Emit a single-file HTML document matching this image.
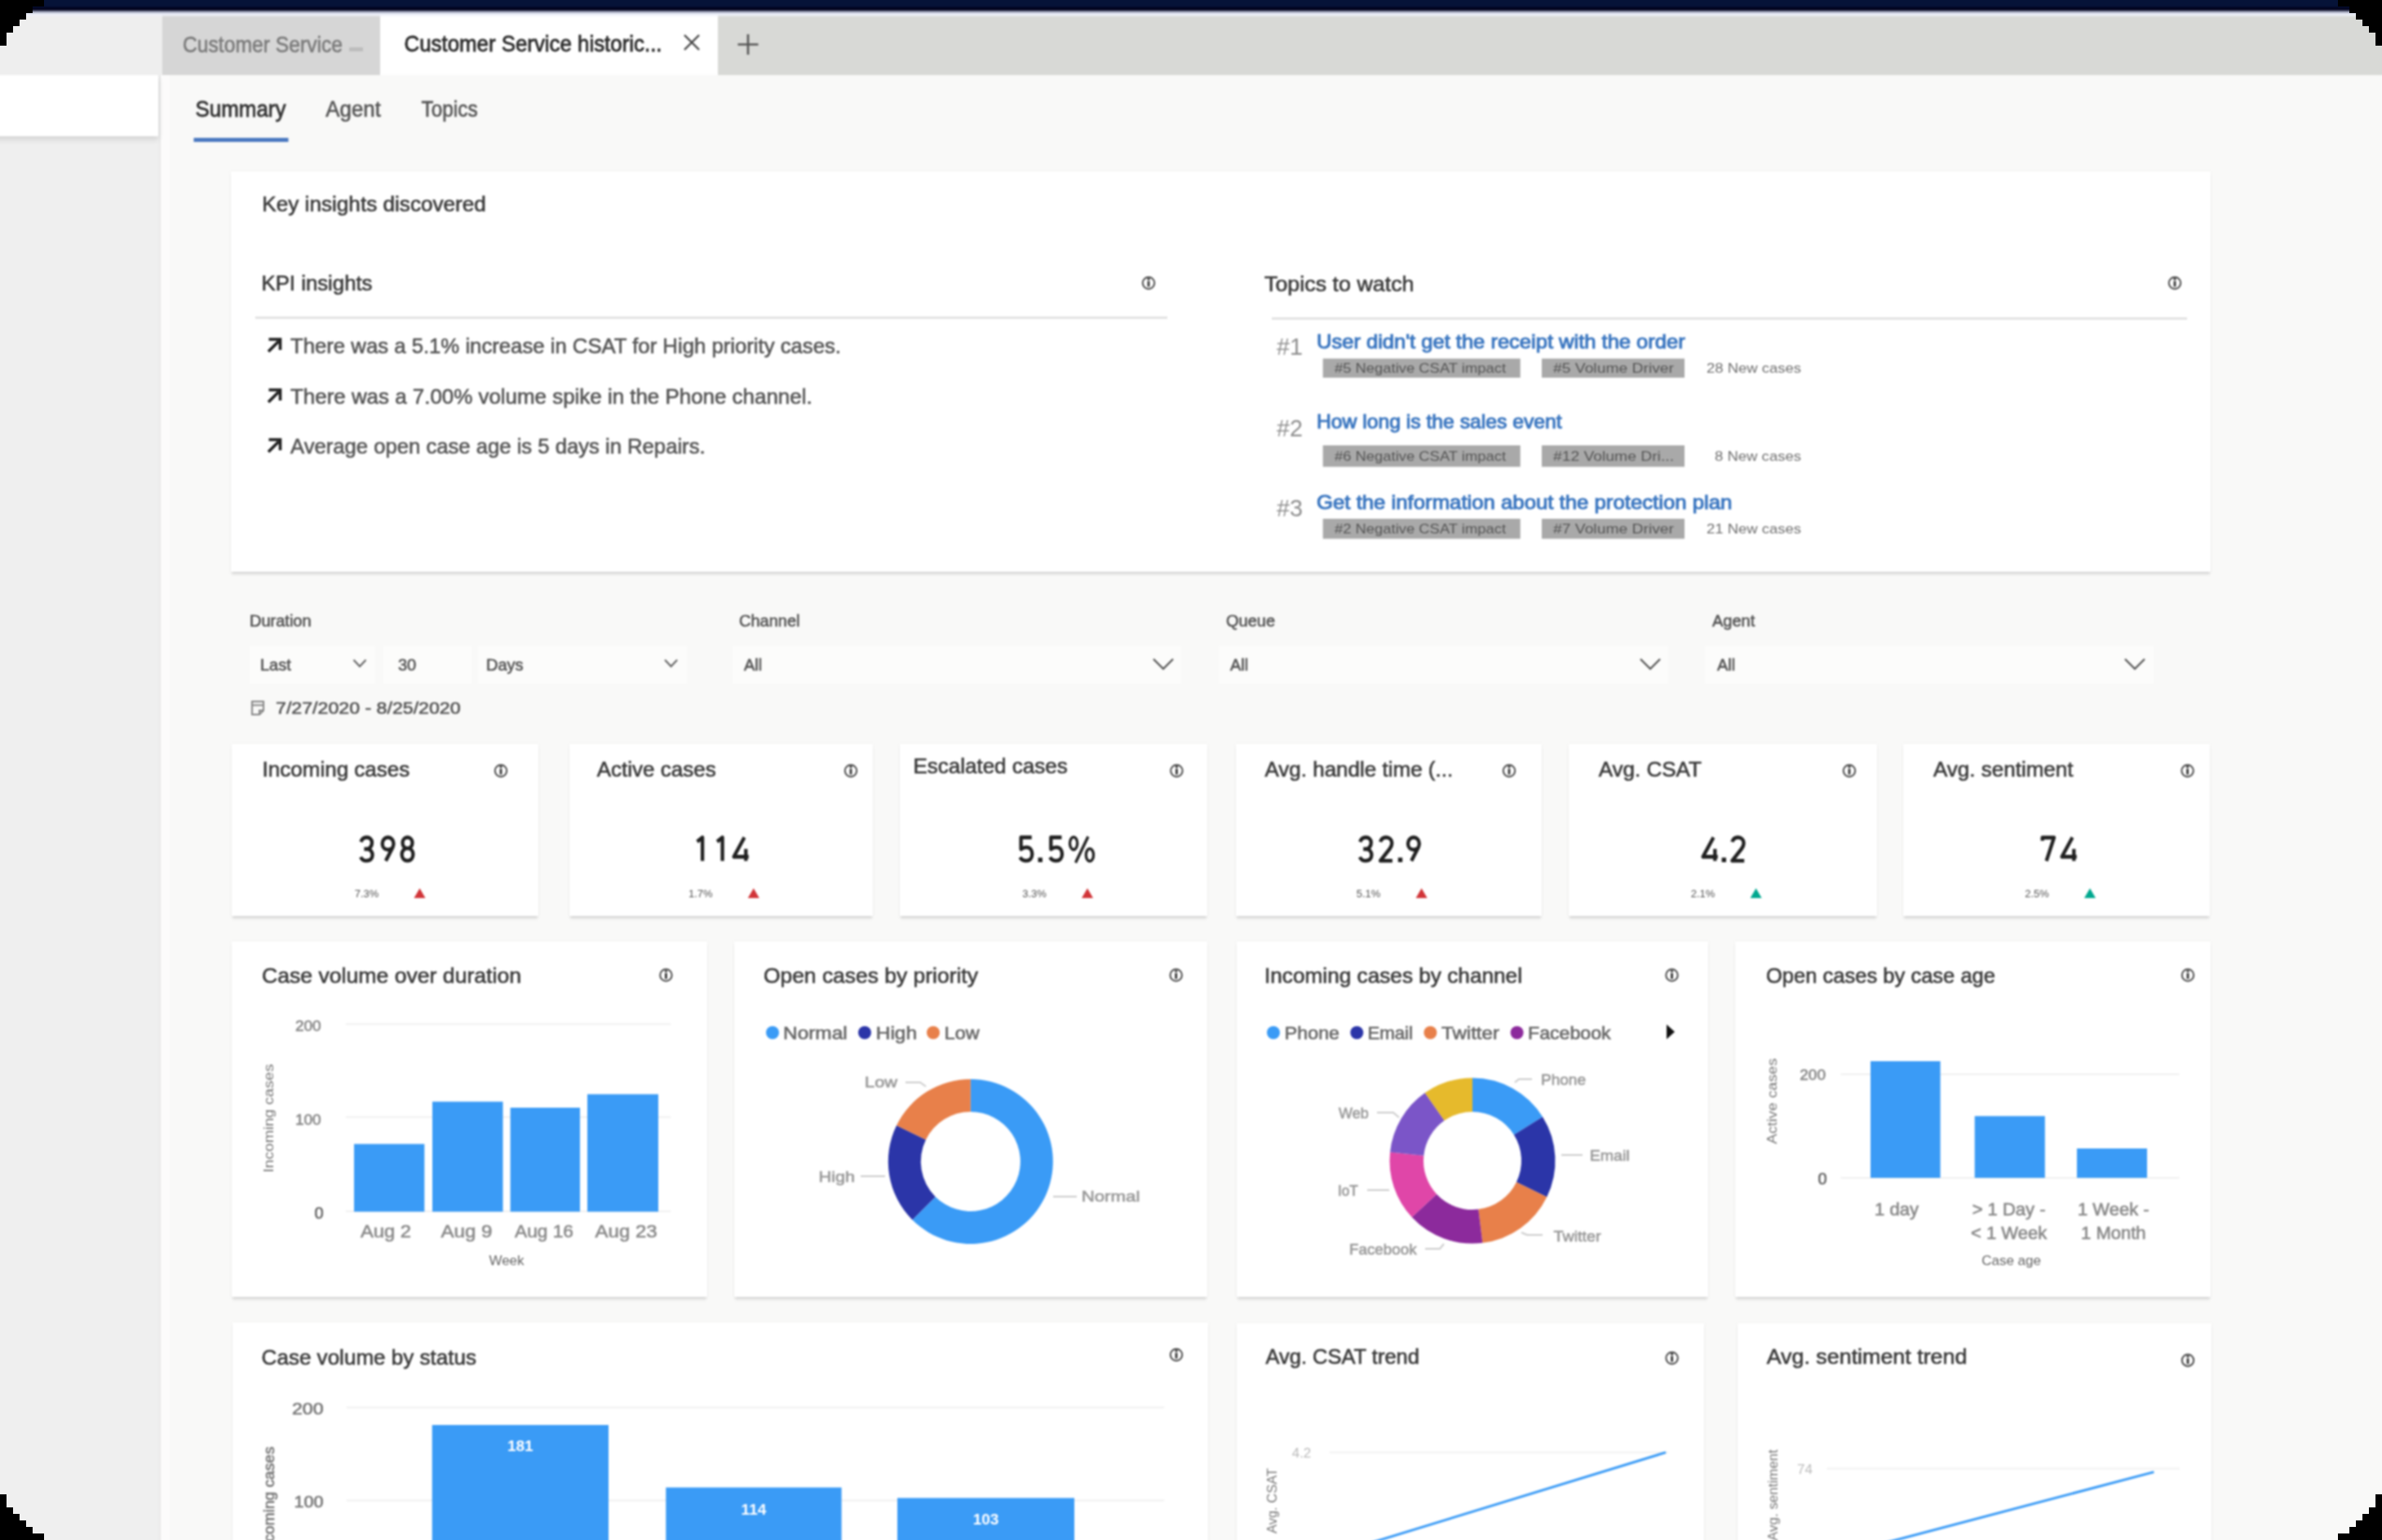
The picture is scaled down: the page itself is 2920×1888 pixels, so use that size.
<!DOCTYPE html>
<html><head><meta charset="utf-8"><title>Customer Service historical analytics</title>
<style>
html,body{margin:0;padding:0;width:2920px;height:1888px;overflow:hidden;background:#f9f9f8;}
body{position:relative;font-family:"Liberation Sans", sans-serif;}
svg text{font-family:"Liberation Sans", sans-serif;}
</style></head><body>
<div id="page" style="position:absolute;left:0;top:0;width:2920px;height:1888px;filter:blur(1.2px)">
<div style="position:absolute;left:-40px;top:-40px;width:3000px;height:1968px;background:#f9f9f8;"></div>
<div style="position:absolute;left:-40px;top:92px;width:236px;height:1836px;background:#efefef;"></div>
<div style="position:absolute;left:195px;top:92px;width:2px;height:1836px;background:#e9e9e9;"></div>
<div style="position:absolute;left:197px;top:92px;width:11px;height:1836px;background:#fcfbfb;"></div>
<div style="position:absolute;left:-40px;top:92px;width:234px;height:75px;background:#ffffff;box-shadow:0 4px 7px rgba(0,0,0,0.12);"></div>
<div style="position:absolute;left:-40px;top:13px;width:3000px;height:79px;background:#d8d9d6;"></div>
<div style="position:absolute;left:-40px;top:13px;width:239px;height:79px;background:#eeeeee;"></div>
<div style="position:absolute;left:199px;top:17px;width:267px;height:75px;background:#d6d6d6;"></div>
<div style="position:absolute;left:466px;top:17px;width:414px;height:75px;background:#ffffff;"></div>
<div style="position:absolute;left:-40px;top:-40px;width:3000px;height:61px;background:linear-gradient(to bottom,#061338 0px,#061338 48px,#00001a 50px,#00001a 52px,#8a90a8 54px,#eef1fb 57px,#eef1fb 58px,rgba(238,241,251,0) 61px);"></div>
<div style="position:absolute;left:283px;top:210px;width:2427px;height:491px;background:#fff;box-shadow:0 4px 3px -1px rgba(0,0,0,0.13),0 0 3px rgba(0,0,0,0.06);"></div>
<div style="position:absolute;left:284px;top:912px;width:376px;height:211px;background:#fff;box-shadow:0 4px 3px -1px rgba(0,0,0,0.13),0 0 3px rgba(0,0,0,0.06);"></div>
<div style="position:absolute;left:698px;top:912px;width:372px;height:211px;background:#fff;box-shadow:0 4px 3px -1px rgba(0,0,0,0.13),0 0 3px rgba(0,0,0,0.06);"></div>
<div style="position:absolute;left:1103px;top:912px;width:377px;height:211px;background:#fff;box-shadow:0 4px 3px -1px rgba(0,0,0,0.13),0 0 3px rgba(0,0,0,0.06);"></div>
<div style="position:absolute;left:1515px;top:912px;width:375px;height:211px;background:#fff;box-shadow:0 4px 3px -1px rgba(0,0,0,0.13),0 0 3px rgba(0,0,0,0.06);"></div>
<div style="position:absolute;left:1923px;top:912px;width:378px;height:211px;background:#fff;box-shadow:0 4px 3px -1px rgba(0,0,0,0.13),0 0 3px rgba(0,0,0,0.06);"></div>
<div style="position:absolute;left:2333px;top:912px;width:376px;height:211px;background:#fff;box-shadow:0 4px 3px -1px rgba(0,0,0,0.13),0 0 3px rgba(0,0,0,0.06);"></div>
<div style="position:absolute;left:284px;top:1154px;width:583px;height:436px;background:#fff;box-shadow:0 4px 3px -1px rgba(0,0,0,0.13),0 0 3px rgba(0,0,0,0.06);"></div>
<div style="position:absolute;left:900px;top:1154px;width:580px;height:436px;background:#fff;box-shadow:0 4px 3px -1px rgba(0,0,0,0.13),0 0 3px rgba(0,0,0,0.06);"></div>
<div style="position:absolute;left:1516px;top:1154px;width:578px;height:436px;background:#fff;box-shadow:0 4px 3px -1px rgba(0,0,0,0.13),0 0 3px rgba(0,0,0,0.06);"></div>
<div style="position:absolute;left:2127px;top:1154px;width:583px;height:436px;background:#fff;box-shadow:0 4px 3px -1px rgba(0,0,0,0.13),0 0 3px rgba(0,0,0,0.06);"></div>
<div style="position:absolute;left:284.5px;top:1621px;width:1196.5px;height:319px;background:#fff;box-shadow:0 4px 3px -1px rgba(0,0,0,0.13),0 0 3px rgba(0,0,0,0.06);"></div>
<div style="position:absolute;left:1516px;top:1622px;width:573px;height:318px;background:#fff;box-shadow:0 4px 3px -1px rgba(0,0,0,0.13),0 0 3px rgba(0,0,0,0.06);"></div>
<div style="position:absolute;left:2130px;top:1622px;width:581px;height:318px;background:#fff;box-shadow:0 4px 3px -1px rgba(0,0,0,0.13),0 0 3px rgba(0,0,0,0.06);"></div>
<svg width="2920" height="1928" viewBox="0 0 2920 1928" style="position:absolute;left:0;top:0;overflow:visible">
<text x="224" y="64" font-size="28" textLength="196" lengthAdjust="spacingAndGlyphs" fill="#7a7a7a" stroke="#7a7a7a" stroke-width="0.6" >Customer Service</text>
<rect x="428" y="58" width="17" height="5" fill="#bdbdbd"/>
<text x="495.5" y="63" font-size="28" textLength="316" lengthAdjust="spacingAndGlyphs" fill="#2b2b2b" stroke="#2b2b2b" stroke-width="0.8" >Customer Service historic...</text>
<path d="M839 43 L857 61 M857 43 L839 61" stroke="#444" stroke-width="2.4" fill="none"/>
<path d="M917 42 L917 67 M904.5 54.5 L929.5 54.5" stroke="#555" stroke-width="2.6" fill="none"/>
<text x="239.6" y="143" font-size="27" textLength="110.8" lengthAdjust="spacingAndGlyphs" fill="#333" stroke="#333" stroke-width="0.8" >Summary</text>
<text x="399.3" y="143" font-size="27" textLength="67.6" lengthAdjust="spacingAndGlyphs" fill="#555" stroke="#555" stroke-width="0.6" >Agent</text>
<text x="516.6" y="143" font-size="27" textLength="69" lengthAdjust="spacingAndGlyphs" fill="#555" stroke="#555" stroke-width="0.6" >Topics</text>
<rect x="237.5" y="169" width="116" height="5" fill="#4a78c0" />
<text x="321.3" y="259" font-size="26" textLength="274.6" lengthAdjust="spacingAndGlyphs" fill="#3a3a3a" stroke="#3a3a3a" stroke-width="0.6" >Key insights discovered</text>
<text x="320.5" y="356" font-size="26" textLength="136" lengthAdjust="spacingAndGlyphs" fill="#3a3a3a" stroke="#3a3a3a" stroke-width="0.6" >KPI insights</text>
<circle cx="1408" cy="347" r="7.2" fill="none" stroke="#4a4a4a" stroke-width="2"/>
<rect x="1406.6" y="344.5" width="2.8" height="7" fill="#333"/>
<rect x="1406.6" y="341" width="2.8" height="2.4" fill="#333"/>
<rect x="313" y="388" width="1118" height="3" fill="#e3e3e3" />
<path d="M329 431 L341.5 418.5 M329.5 416 L343.5 416 L343.5 429" stroke="#1e1e1e" stroke-width="3.6" fill="none" stroke-linejoin="miter"/>
<text x="356" y="433" font-size="26" textLength="675" lengthAdjust="spacingAndGlyphs" fill="#555" stroke="#555" stroke-width="0.6" >There was a 5.1% increase in CSAT for High priority cases.</text>
<path d="M329 493 L341.5 480.5 M329.5 478 L343.5 478 L343.5 491" stroke="#1e1e1e" stroke-width="3.6" fill="none" stroke-linejoin="miter"/>
<text x="356" y="495" font-size="26" textLength="639.6" lengthAdjust="spacingAndGlyphs" fill="#555" stroke="#555" stroke-width="0.6" >There was a 7.00% volume spike in the Phone channel.</text>
<path d="M329 554 L341.5 541.5 M329.5 539 L343.5 539 L343.5 552" stroke="#1e1e1e" stroke-width="3.6" fill="none" stroke-linejoin="miter"/>
<text x="356" y="556" font-size="26" textLength="508.6" lengthAdjust="spacingAndGlyphs" fill="#555" stroke="#555" stroke-width="0.6" >Average open case age is 5 days in Repairs.</text>
<text x="1550" y="357" font-size="26" textLength="183.5" lengthAdjust="spacingAndGlyphs" fill="#3a3a3a" stroke="#3a3a3a" stroke-width="0.6" >Topics to watch</text>
<circle cx="2666" cy="347" r="7.2" fill="none" stroke="#4a4a4a" stroke-width="2"/>
<rect x="2664.6" y="344.5" width="2.8" height="7" fill="#333"/>
<rect x="2664.6" y="341" width="2.8" height="2.4" fill="#333"/>
<rect x="1559" y="389" width="1122" height="3" fill="#e3e3e3" />
<text x="1565" y="435" font-size="30" textLength="32" lengthAdjust="spacingAndGlyphs" fill="#8f8f8f" >#1</text>
<text x="1614" y="426.6" font-size="24" textLength="451.6999999999998" lengthAdjust="spacingAndGlyphs" fill="#3a76c0" stroke="#3a76c0" stroke-width="1.0" >User didn&#39;t get the receipt with the order</text>
<rect x="1621.7" y="439.6" width="242" height="23.399999999999977" fill="#a9a9a9" />
<rect x="1890" y="439.6" width="175" height="23.399999999999977" fill="#a9a9a9" />
<text x="1636" y="457.3" font-size="17" textLength="210" lengthAdjust="spacingAndGlyphs" fill="#555" >#5 Negative CSAT impact</text>
<text x="1904" y="457.3" font-size="17" textLength="148" lengthAdjust="spacingAndGlyphs" fill="#555" >#5 Volume Driver</text>
<text x="2092" y="457.3" font-size="17" textLength="116" lengthAdjust="spacingAndGlyphs" fill="#707070" >28 New cases</text>
<text x="1565" y="534.5" font-size="30" textLength="32" lengthAdjust="spacingAndGlyphs" fill="#8f8f8f" >#2</text>
<text x="1614" y="525" font-size="24" textLength="300.5999999999999" lengthAdjust="spacingAndGlyphs" fill="#3a76c0" stroke="#3a76c0" stroke-width="1.0" >How long is the sales event</text>
<rect x="1621.7" y="546" width="242" height="26.299999999999955" fill="#a9a9a9" />
<rect x="1890" y="546" width="175" height="26.299999999999955" fill="#a9a9a9" />
<text x="1636" y="565.15" font-size="17" textLength="210" lengthAdjust="spacingAndGlyphs" fill="#555" >#6 Negative CSAT impact</text>
<text x="1904" y="565.15" font-size="17" textLength="148" lengthAdjust="spacingAndGlyphs" fill="#555" >#12 Volume Dri...</text>
<text x="2102" y="565.15" font-size="17" textLength="106" lengthAdjust="spacingAndGlyphs" fill="#707070" >8 New cases</text>
<text x="1565" y="633" font-size="30" textLength="32" lengthAdjust="spacingAndGlyphs" fill="#8f8f8f" >#3</text>
<text x="1614" y="624.4" font-size="24" textLength="509.4000000000001" lengthAdjust="spacingAndGlyphs" fill="#3a76c0" stroke="#3a76c0" stroke-width="1.0" >Get the information about the protection plan</text>
<rect x="1621.7" y="636" width="242" height="24.5" fill="#a9a9a9" />
<rect x="1890" y="636" width="175" height="24.5" fill="#a9a9a9" />
<text x="1636" y="654.25" font-size="17" textLength="210" lengthAdjust="spacingAndGlyphs" fill="#555" >#2 Negative CSAT impact</text>
<text x="1904" y="654.25" font-size="17" textLength="148" lengthAdjust="spacingAndGlyphs" fill="#555" >#7 Volume Driver</text>
<text x="2092" y="654.25" font-size="17" textLength="116" lengthAdjust="spacingAndGlyphs" fill="#707070" >21 New cases</text>
<text x="306" y="768" font-size="20" fill="#555" stroke="#555" stroke-width="0.6" >Duration</text>
<text x="906" y="768" font-size="20" fill="#555" stroke="#555" stroke-width="0.6" >Channel</text>
<text x="1503" y="768" font-size="20" fill="#555" stroke="#555" stroke-width="0.6" >Queue</text>
<text x="2099" y="768" font-size="20" fill="#555" stroke="#555" stroke-width="0.6" >Agent</text>
<rect x="306" y="792" width="154" height="46" fill="#fcfcfb" />
<rect x="470" y="792" width="108" height="46" fill="#fcfcfb" />
<rect x="586" y="792" width="256" height="46" fill="#fcfcfb" />
<rect x="898" y="792" width="550" height="46" fill="#fcfcfb" />
<rect x="1494" y="792" width="551" height="46" fill="#fcfcfb" />
<rect x="2090" y="792" width="550" height="46" fill="#fcfcfb" />
<text x="319" y="822" font-size="20" fill="#555" stroke="#555" stroke-width="0.6" >Last</text>
<path d="M433.5 809.0 L441 817.0 L448.5 809.0" fill="none" stroke="#606060" stroke-width="2"/>
<text x="488" y="822" font-size="20" fill="#555" stroke="#555" stroke-width="0.6" >30</text>
<text x="596" y="822" font-size="20" fill="#555" stroke="#555" stroke-width="0.6" >Days</text>
<path d="M815.1 809.0 L822.6 817.0 L830.1 809.0" fill="none" stroke="#606060" stroke-width="2"/>
<text x="912" y="822" font-size="20" fill="#555" stroke="#555" stroke-width="0.6" >All</text>
<path d="M1414.0 808.0 L1426 820.0 L1438.0 808.0" fill="none" stroke="#505050" stroke-width="2.2"/>
<text x="1508" y="822" font-size="20" fill="#555" stroke="#555" stroke-width="0.6" >All</text>
<path d="M2011.0 808.0 L2023 820.0 L2035.0 808.0" fill="none" stroke="#505050" stroke-width="2.2"/>
<text x="2105" y="822" font-size="20" fill="#555" stroke="#555" stroke-width="0.6" >All</text>
<path d="M2605.0 808.0 L2617 820.0 L2629.0 808.0" fill="none" stroke="#505050" stroke-width="2.2"/>
<path d="M309 860 L323 860 L323 871 L318 876 L309 876 Z M309 864.5 L323 864.5 M318 876 L318 871 L323 871" fill="none" stroke="#858585" stroke-width="2"/>
<text x="338" y="875" font-size="21" textLength="226.6" lengthAdjust="spacingAndGlyphs" fill="#555" stroke="#555" stroke-width="0.6" >7/27/2020 - 8/25/2020</text>
<text x="321.6" y="952" font-size="26" fill="#3a3a3a" stroke="#3a3a3a" stroke-width="0.6" >Incoming cases</text>
<circle cx="614" cy="945" r="7.2" fill="none" stroke="#4a4a4a" stroke-width="2"/>
<rect x="612.6" y="942.5" width="2.8" height="7" fill="#333"/>
<rect x="612.6" y="939" width="2.8" height="2.4" fill="#333"/>
<path transform="translate(440 1024.4) scale(1 1.07)" d="M2.4 7.2 C3.8 3.5 6.6 2.1 9.4 2.1 C13.4 2.1 16 4.6 16 8.2 C16 12.1 13.2 15.4 9.4 15.4 L6.4 15.4 M9.4 15.4 C13.9 15.4 16.6 18.6 16.6 22.4 C16.6 26.4 13.6 28.9 9.4 28.9 C6.4 28.9 3.6 27.5 2.1 24.6" fill="none" stroke="#202020" stroke-width="4.3" stroke-linejoin="round"/>
<path transform="translate(466.5 1024.4) scale(1 1.07)" d="M9.1 2.1 C5.2 2.1 2.2 5.2 2.2 9.2 C2.2 13.2 5.2 16.2 9.1 16.2 C13 16.2 16 13.2 16 9.2 C16 5.2 13 2.1 9.1 2.1 Z M15.3 12.8 L6.4 29" fill="none" stroke="#202020" stroke-width="4.3" stroke-linejoin="round"/>
<path transform="translate(490.5 1024.4) scale(1 1.07)" d="M9 2.1 C5.6 2.1 3 4.8 3 8.3 C3 11.8 5.6 14.6 9 14.6 C12.4 14.6 15 11.8 15 8.3 C15 4.8 12.4 2.1 9 2.1 Z M9 14.6 C5 14.6 2.1 17.6 2.1 21.7 C2.1 25.8 5 28.9 9 28.9 C13 28.9 15.9 25.8 15.9 21.7 C15.9 17.6 13 14.6 9 14.6 Z" fill="none" stroke="#202020" stroke-width="4.3" stroke-linejoin="round"/>
<text x="449.5" y="1100" font-size="13" text-anchor="middle" fill="#555" >7.3%</text>
<path d="M507.5 1101 L521.5 1101 L514.5 1089 Z" fill="#d13438"/>
<text x="731.7" y="952" font-size="26" fill="#3a3a3a" stroke="#3a3a3a" stroke-width="0.6" >Active cases</text>
<circle cx="1043" cy="945" r="7.2" fill="none" stroke="#4a4a4a" stroke-width="2"/>
<rect x="1041.6" y="942.5" width="2.8" height="7" fill="#333"/>
<rect x="1041.6" y="939" width="2.8" height="2.4" fill="#333"/>
<path transform="translate(852.5 1024.4) scale(1 1.07)" d="M2.1 7 L8.6 2.1 L8.6 29" fill="none" stroke="#202020" stroke-width="4.3" stroke-linejoin="round"/>
<path transform="translate(877 1024.4) scale(1 1.07)" d="M2.1 7 L8.6 2.1 L8.6 29" fill="none" stroke="#202020" stroke-width="4.3" stroke-linejoin="round"/>
<path transform="translate(897.5 1024.4) scale(1 1.07)" d="M15 2.1 L2.1 24.3 L20.2 24.3 M16.8 15.2 L16.8 29" fill="none" stroke="#202020" stroke-width="4.3" stroke-linejoin="round"/>
<text x="858.8" y="1100" font-size="13" text-anchor="middle" fill="#555" >1.7%</text>
<path d="M916.8 1101 L930.8 1101 L923.8 1089 Z" fill="#d13438"/>
<text x="1119.4" y="948" font-size="26" fill="#3a3a3a" stroke="#3a3a3a" stroke-width="0.6" >Escalated cases</text>
<circle cx="1442.4" cy="945" r="7.2" fill="none" stroke="#4a4a4a" stroke-width="2"/>
<rect x="1441.0" y="942.5" width="2.8" height="7" fill="#333"/>
<rect x="1441.0" y="939" width="2.8" height="2.4" fill="#333"/>
<path transform="translate(1248.3 1024.4) scale(1 1.07)" d="M16.4 2.1 L3.3 2.1 L3.3 15.6 C5.1 14.2 7.6 13.4 10 13.4 C14.4 13.4 17 16.9 17 21.2 C17 25.8 14 28.9 9.8 28.9 C6.5 28.9 3.8 27.5 2.1 24.8" fill="none" stroke="#202020" stroke-width="4.3" stroke-linejoin="round"/>
<rect x="1272.5" y="1051.4" width="5.4" height="5.6" fill="#202020"/>
<path transform="translate(1285 1024.4) scale(1 1.07)" d="M16.4 2.1 L3.3 2.1 L3.3 15.6 C5.1 14.2 7.6 13.4 10 13.4 C14.4 13.4 17 16.9 17 21.2 C17 25.8 14 28.9 9.8 28.9 C6.5 28.9 3.8 27.5 2.1 24.8" fill="none" stroke="#202020" stroke-width="4.3" stroke-linejoin="round"/>
<g transform="translate(1309.5 1024.4) scale(1 1.07)" fill="none" stroke="#202020" stroke-width="3.3"><ellipse cx="6.6" cy="8.9" rx="4.6" ry="7.2"/><ellipse cx="26.4" cy="22.2" rx="4.6" ry="7.2"/><path d="M24.4 1.2 L9 31"/></g>
<text x="1268" y="1100" font-size="13" text-anchor="middle" fill="#555" >3.3%</text>
<path d="M1326 1101 L1340 1101 L1333 1089 Z" fill="#d13438"/>
<text x="1550.4" y="952" font-size="26" fill="#3a3a3a" stroke="#3a3a3a" stroke-width="0.6" >Avg. handle time (...</text>
<circle cx="1850" cy="945" r="7.2" fill="none" stroke="#4a4a4a" stroke-width="2"/>
<rect x="1848.6" y="942.5" width="2.8" height="7" fill="#333"/>
<rect x="1848.6" y="939" width="2.8" height="2.4" fill="#333"/>
<path transform="translate(1664.8 1024.4) scale(1 1.07)" d="M2.4 7.2 C3.8 3.5 6.6 2.1 9.4 2.1 C13.4 2.1 16 4.6 16 8.2 C16 12.1 13.2 15.4 9.4 15.4 L6.4 15.4 M9.4 15.4 C13.9 15.4 16.6 18.6 16.6 22.4 C16.6 26.4 13.6 28.9 9.4 28.9 C6.4 28.9 3.6 27.5 2.1 24.6" fill="none" stroke="#202020" stroke-width="4.3" stroke-linejoin="round"/>
<path transform="translate(1689.7 1024.4) scale(1 1.07)" d="M2.4 7.2 C3.6 3.6 6.4 2.1 9.5 2.1 C13.6 2.1 16.6 4.9 16.6 8.7 C16.6 11.2 15.6 13 14 15 L2.4 28.9 L17.2 28.9" fill="none" stroke="#202020" stroke-width="4.3" stroke-linejoin="round"/>
<rect x="1713.8" y="1051.4" width="5.4" height="5.6" fill="#202020"/>
<path transform="translate(1723.8 1024.4) scale(1 1.07)" d="M9.1 2.1 C5.2 2.1 2.2 5.2 2.2 9.2 C2.2 13.2 5.2 16.2 9.1 16.2 C13 16.2 16 13.2 16 9.2 C16 5.2 13 2.1 9.1 2.1 Z M15.3 12.8 L6.4 29" fill="none" stroke="#202020" stroke-width="4.3" stroke-linejoin="round"/>
<text x="1677.6" y="1100" font-size="13" text-anchor="middle" fill="#555" >5.1%</text>
<path d="M1735.6 1101 L1749.6 1101 L1742.6 1089 Z" fill="#d13438"/>
<text x="1959.7" y="952" font-size="26" fill="#3a3a3a" stroke="#3a3a3a" stroke-width="0.6" >Avg. CSAT</text>
<circle cx="2267" cy="945" r="7.2" fill="none" stroke="#4a4a4a" stroke-width="2"/>
<rect x="2265.6" y="942.5" width="2.8" height="7" fill="#333"/>
<rect x="2265.6" y="939" width="2.8" height="2.4" fill="#333"/>
<path transform="translate(2085.5 1024.4) scale(1 1.07)" d="M15 2.1 L2.1 24.3 L20.2 24.3 M16.8 15.2 L16.8 29" fill="none" stroke="#202020" stroke-width="4.3" stroke-linejoin="round"/>
<rect x="2110.6" y="1051.4" width="5.4" height="5.6" fill="#202020"/>
<path transform="translate(2121 1024.4) scale(1 1.07)" d="M2.4 7.2 C3.6 3.6 6.4 2.1 9.5 2.1 C13.6 2.1 16.6 4.9 16.6 8.7 C16.6 11.2 15.6 13 14 15 L2.4 28.9 L17.2 28.9" fill="none" stroke="#202020" stroke-width="4.3" stroke-linejoin="round"/>
<text x="2087.6" y="1100" font-size="13" text-anchor="middle" fill="#555" >2.1%</text>
<path d="M2145.6 1101 L2159.6 1101 L2152.6 1089 Z" fill="#00a88f"/>
<text x="2370" y="952" font-size="26" fill="#3a3a3a" stroke="#3a3a3a" stroke-width="0.6" >Avg. sentiment</text>
<circle cx="2681.6" cy="945" r="7.2" fill="none" stroke="#4a4a4a" stroke-width="2"/>
<rect x="2680.2" y="942.5" width="2.8" height="7" fill="#333"/>
<rect x="2680.2" y="939" width="2.8" height="2.4" fill="#333"/>
<path transform="translate(2501.4 1024.4) scale(1 1.07)" d="M2.3 6 L2.3 2.3 L16.6 2.3 L7.2 29" fill="none" stroke="#202020" stroke-width="4.3" stroke-linejoin="round"/>
<path transform="translate(2525.5 1024.4) scale(1 1.07)" d="M15 2.1 L2.1 24.3 L20.2 24.3 M16.8 15.2 L16.8 29" fill="none" stroke="#202020" stroke-width="4.3" stroke-linejoin="round"/>
<text x="2497" y="1100" font-size="13" text-anchor="middle" fill="#555" >2.5%</text>
<path d="M2555 1101 L2569 1101 L2562 1089 Z" fill="#00a88f"/>
<text x="321" y="1205" font-size="26" textLength="318" lengthAdjust="spacingAndGlyphs" fill="#3a3a3a" stroke="#3a3a3a" stroke-width="0.6" >Case volume over duration</text>
<circle cx="816.4" cy="1195.5" r="7.2" fill="none" stroke="#4a4a4a" stroke-width="2"/>
<rect x="815.0" y="1193.0" width="2.8" height="7" fill="#333"/>
<rect x="815.0" y="1189.5" width="2.8" height="2.4" fill="#333"/>
<rect x="424" y="1254.5" width="398" height="2" fill="#f0f0f0" />
<rect x="424" y="1368.5" width="398" height="2" fill="#f0f0f0" />
<rect x="424" y="1484" width="398" height="2" fill="#f0f0f0" />
<text x="393.6" y="1264" font-size="19" text-anchor="end" fill="#888" stroke="#888" stroke-width="0.6" >200</text>
<text x="393.6" y="1379" font-size="19" text-anchor="end" fill="#888" stroke="#888" stroke-width="0.6" >100</text>
<text x="396.7" y="1494" font-size="20" text-anchor="end" fill="#666" stroke="#666" stroke-width="0.6" >0</text>
<rect x="434" y="1402.5" width="86.29999999999995" height="83.0" fill="#3a9bf6" />
<rect x="530" y="1350.6" width="86.5" height="134.9000000000001" fill="#3a9bf6" />
<rect x="625.6" y="1358" width="85.39999999999998" height="127.5" fill="#3a9bf6" />
<rect x="720" y="1341.5" width="87" height="144.0" fill="#3a9bf6" />
<text x="473" y="1517" font-size="22" text-anchor="middle" textLength="62" lengthAdjust="spacingAndGlyphs" fill="#8a8a8a" stroke="#8a8a8a" stroke-width="0.6" >Aug 2</text>
<text x="572" y="1517" font-size="22" text-anchor="middle" textLength="63" lengthAdjust="spacingAndGlyphs" fill="#8a8a8a" stroke="#8a8a8a" stroke-width="0.6" >Aug 9</text>
<text x="667" y="1517" font-size="22" text-anchor="middle" textLength="72" lengthAdjust="spacingAndGlyphs" fill="#8a8a8a" stroke="#8a8a8a" stroke-width="0.6" >Aug 16</text>
<text x="767.6" y="1517" font-size="22" text-anchor="middle" textLength="76" lengthAdjust="spacingAndGlyphs" fill="#8a8a8a" stroke="#8a8a8a" stroke-width="0.6" >Aug 23</text>
<text x="621" y="1551" font-size="17" text-anchor="middle" fill="#666" >Week</text>
<text x="0" y="0" font-size="16" text-anchor="middle" textLength="133" lengthAdjust="spacingAndGlyphs" fill="#777" transform="translate(335 1371) rotate(-90)">Incoming cases</text>
<text x="935.9" y="1205" font-size="26" textLength="263" lengthAdjust="spacingAndGlyphs" fill="#3a3a3a" stroke="#3a3a3a" stroke-width="0.6" >Open cases by priority</text>
<circle cx="1441.7" cy="1195.5" r="7.2" fill="none" stroke="#4a4a4a" stroke-width="2"/>
<rect x="1440.3" y="1193.0" width="2.8" height="7" fill="#333"/>
<rect x="1440.3" y="1189.5" width="2.8" height="2.4" fill="#333"/>
<circle cx="947" cy="1266" r="8" fill="#3a9bf6"/>
<text x="960" y="1274" font-size="22" textLength="78.70000000000005" lengthAdjust="spacingAndGlyphs" fill="#666" stroke="#666" stroke-width="0.6" >Normal</text>
<circle cx="1060" cy="1266" r="8" fill="#2b35a8"/>
<text x="1073.8" y="1274" font-size="22" textLength="50.200000000000045" lengthAdjust="spacingAndGlyphs" fill="#666" stroke="#666" stroke-width="0.6" >High</text>
<circle cx="1144" cy="1266" r="8" fill="#e8804a"/>
<text x="1157.8" y="1274" font-size="22" textLength="42.700000000000045" lengthAdjust="spacingAndGlyphs" fill="#666" stroke="#666" stroke-width="0.6" >Low</text>
<path d="M1189.80 1323.00 A101 101 0 1 1 1118.38 1495.42 L1146.67 1467.13 A61 61 0 1 0 1189.80 1363.00 Z" fill="#3a9bf6"/>
<path d="M1118.38 1495.42 A101 101 0 0 1 1099.02 1379.72 L1134.97 1397.26 A61 61 0 0 0 1146.67 1467.13 Z" fill="#2b35a8"/>
<path d="M1099.02 1379.72 A101 101 0 0 1 1189.80 1323.00 L1189.80 1363.00 A61 61 0 0 0 1134.97 1397.26 Z" fill="#e8804a"/>
<text x="1060" y="1333" font-size="19" textLength="40" lengthAdjust="spacingAndGlyphs" fill="#999" stroke="#999" stroke-width="0.6" >Low</text>
<path d="M1110 1327 L1128 1327 L1135 1332" stroke="#ccc" stroke-width="2" fill="none"/>
<text x="1003.6" y="1449" font-size="19" textLength="44.4" lengthAdjust="spacingAndGlyphs" fill="#999" stroke="#999" stroke-width="0.6" >High</text>
<path d="M1055 1442 L1085 1442" stroke="#ccc" stroke-width="2" fill="none"/>
<text x="1325.7" y="1473" font-size="19" textLength="71.7" lengthAdjust="spacingAndGlyphs" fill="#999" stroke="#999" stroke-width="0.6" >Normal</text>
<path d="M1291 1467 L1320 1467" stroke="#ccc" stroke-width="2" fill="none"/>
<text x="1550" y="1205" font-size="26" textLength="316" lengthAdjust="spacingAndGlyphs" fill="#3a3a3a" stroke="#3a3a3a" stroke-width="0.6" >Incoming cases by channel</text>
<circle cx="2049.5" cy="1195.5" r="7.2" fill="none" stroke="#4a4a4a" stroke-width="2"/>
<rect x="2048.1" y="1193.0" width="2.8" height="7" fill="#333"/>
<rect x="2048.1" y="1189.5" width="2.8" height="2.4" fill="#333"/>
<circle cx="1561" cy="1266" r="8" fill="#3a9bf6"/>
<text x="1574.8" y="1274" font-size="22" textLength="67.20000000000005" lengthAdjust="spacingAndGlyphs" fill="#666" stroke="#666" stroke-width="0.6" >Phone</text>
<circle cx="1663.3" cy="1266" r="8" fill="#2b35a8"/>
<text x="1676.4" y="1274" font-size="22" textLength="55.59999999999991" lengthAdjust="spacingAndGlyphs" fill="#666" stroke="#666" stroke-width="0.6" >Email</text>
<circle cx="1753.4" cy="1266" r="8" fill="#e8804a"/>
<text x="1767" y="1274" font-size="22" textLength="71" lengthAdjust="spacingAndGlyphs" fill="#666" stroke="#666" stroke-width="0.6" >Twitter</text>
<circle cx="1859.6" cy="1266" r="8" fill="#8c2a9c"/>
<text x="1873" y="1274" font-size="22" textLength="101.70000000000005" lengthAdjust="spacingAndGlyphs" fill="#666" stroke="#666" stroke-width="0.6" >Facebook</text>
<path d="M2043 1256 L2053 1265 L2043 1274 Z" fill="#111"/>
<path d="M1805.00 1321.50 A101.5 101.5 0 0 1 1891.08 1369.21 L1855.88 1391.20 A60 60 0 0 0 1805.00 1363.00 Z" fill="#3a9bf6"/>
<path d="M1891.08 1369.21 A101.5 101.5 0 0 1 1896.23 1467.49 L1858.93 1449.30 A60 60 0 0 0 1855.88 1391.20 Z" fill="#2b35a8"/>
<path d="M1896.23 1467.49 A101.5 101.5 0 0 1 1817.37 1523.74 L1812.31 1482.55 A60 60 0 0 0 1858.93 1449.30 Z" fill="#e8804a"/>
<path d="M1817.37 1523.74 A101.5 101.5 0 0 1 1730.77 1492.22 L1761.12 1463.92 A60 60 0 0 0 1812.31 1482.55 Z" fill="#8c2a9c"/>
<path d="M1730.77 1492.22 A101.5 101.5 0 0 1 1704.06 1412.39 L1745.33 1416.73 A60 60 0 0 0 1761.12 1463.92 Z" fill="#e046a8"/>
<path d="M1704.06 1412.39 A101.5 101.5 0 0 1 1746.78 1339.86 L1770.59 1373.85 A60 60 0 0 0 1745.33 1416.73 Z" fill="#7b55c8"/>
<path d="M1746.78 1339.86 A101.5 101.5 0 0 1 1805.00 1321.50 L1805.00 1363.00 A60 60 0 0 0 1770.59 1373.85 Z" fill="#e6ba2c"/>
<text x="1889" y="1330" font-size="19" textLength="55" lengthAdjust="spacingAndGlyphs" fill="#999" stroke="#999" stroke-width="0.6" >Phone</text>
<text x="1948.7" y="1423" font-size="19" textLength="48.899999999999864" lengthAdjust="spacingAndGlyphs" fill="#999" stroke="#999" stroke-width="0.6" >Email</text>
<text x="1904.5" y="1522" font-size="19" textLength="58.0" lengthAdjust="spacingAndGlyphs" fill="#999" stroke="#999" stroke-width="0.6" >Twitter</text>
<text x="1654" y="1538" font-size="19" textLength="82.59999999999991" lengthAdjust="spacingAndGlyphs" fill="#999" stroke="#999" stroke-width="0.6" >Facebook</text>
<text x="1640" y="1466" font-size="19" textLength="24.799999999999955" lengthAdjust="spacingAndGlyphs" fill="#999" stroke="#999" stroke-width="0.6" >IoT</text>
<text x="1641" y="1371" font-size="19" textLength="36.700000000000045" lengthAdjust="spacingAndGlyphs" fill="#999" stroke="#999" stroke-width="0.6" >Web</text>
<path d="M1857 1327 L1862 1323 L1878 1323" stroke="#ccc" stroke-width="2" fill="none"/>
<path d="M1914 1416 L1940 1416" stroke="#ccc" stroke-width="2" fill="none"/>
<path d="M1865 1511 L1872 1514 L1891 1514" stroke="#ccc" stroke-width="2" fill="none"/>
<path d="M1747 1531 L1765 1531 L1770 1525" stroke="#ccc" stroke-width="2" fill="none"/>
<path d="M1676 1459 L1703 1459" stroke="#ccc" stroke-width="2" fill="none"/>
<path d="M1688 1364 L1708 1364 L1715 1370" stroke="#ccc" stroke-width="2" fill="none"/>
<text x="2165" y="1205" font-size="26" textLength="281" lengthAdjust="spacingAndGlyphs" fill="#3a3a3a" stroke="#3a3a3a" stroke-width="0.6" >Open cases by case age</text>
<circle cx="2682" cy="1195.5" r="7.2" fill="none" stroke="#4a4a4a" stroke-width="2"/>
<rect x="2680.6" y="1193.0" width="2.8" height="7" fill="#333"/>
<rect x="2680.6" y="1189.5" width="2.8" height="2.4" fill="#333"/>
<rect x="2256.5" y="1316" width="415" height="2" fill="#f0f0f0" />
<rect x="2256.5" y="1443" width="415" height="2" fill="#f0f0f0" />
<text x="2238" y="1324" font-size="19" text-anchor="end" fill="#888" stroke="#888" stroke-width="0.6" >200</text>
<text x="2239.7" y="1452" font-size="20" text-anchor="end" fill="#666" stroke="#666" stroke-width="0.6" >0</text>
<text x="0" y="0" font-size="16" text-anchor="middle" textLength="105" lengthAdjust="spacingAndGlyphs" fill="#777" transform="translate(2178 1350) rotate(-90)">Active cases</text>
<rect x="2293" y="1301" width="85.59999999999991" height="143" fill="#3a9bf6" />
<rect x="2420.7" y="1368.3" width="86.10000000000036" height="75.70000000000005" fill="#3a9bf6" />
<rect x="2546" y="1408" width="86" height="36" fill="#3a9bf6" />
<text x="2325" y="1490" font-size="22" text-anchor="middle" fill="#888" stroke="#888" stroke-width="0.6" >1 day</text>
<text x="2462.6" y="1490" font-size="22" text-anchor="middle" fill="#888" stroke="#888" stroke-width="0.6" >&gt; 1 Day -</text>
<text x="2462.6" y="1519" font-size="22" text-anchor="middle" fill="#888" stroke="#888" stroke-width="0.6" >&lt; 1 Week</text>
<text x="2590.8" y="1490" font-size="22" text-anchor="middle" fill="#888" stroke="#888" stroke-width="0.6" >1 Week -</text>
<text x="2590.8" y="1519" font-size="22" text-anchor="middle" fill="#888" stroke="#888" stroke-width="0.6" >1 Month</text>
<text x="2465.6" y="1551" font-size="17" text-anchor="middle" fill="#666" >Case age</text>
<text x="320.6" y="1673" font-size="26" textLength="263.4" lengthAdjust="spacingAndGlyphs" fill="#3a3a3a" stroke="#3a3a3a" stroke-width="0.6" >Case volume by status</text>
<circle cx="1442" cy="1661" r="7.2" fill="none" stroke="#4a4a4a" stroke-width="2"/>
<rect x="1440.6" y="1658.5" width="2.8" height="7" fill="#333"/>
<rect x="1440.6" y="1655" width="2.8" height="2.4" fill="#333"/>
<rect x="425" y="1724.5" width="1002" height="2" fill="#f0f0f0" />
<rect x="425" y="1838.5" width="1002" height="2" fill="#f0f0f0" />
<text x="396.5" y="1734" font-size="20" text-anchor="end" textLength="38.5" lengthAdjust="spacingAndGlyphs" fill="#777" stroke="#777" stroke-width="0.6" >200</text>
<text x="396.5" y="1848" font-size="20" text-anchor="end" textLength="36" lengthAdjust="spacingAndGlyphs" fill="#777" stroke="#777" stroke-width="0.6" >100</text>
<text x="0" y="0" font-size="18" text-anchor="middle" textLength="133" lengthAdjust="spacingAndGlyphs" fill="#777" stroke="#777" stroke-width="0.6" transform="translate(336 1840) rotate(-90)">Incoming cases</text>
<rect x="529.7" y="1747" width="216.29999999999995" height="181" fill="#3a9bf6" />
<text x="637.85" y="1779" font-size="19" font-weight="700" text-anchor="middle" fill="#ffffff" >181</text>
<rect x="816.3" y="1823.6" width="215.29999999999995" height="104.40000000000009" fill="#3a9bf6" />
<text x="923.9499999999999" y="1857" font-size="19" font-weight="700" text-anchor="middle" fill="#ffffff" >114</text>
<rect x="1100" y="1836.5" width="217" height="91.5" fill="#3a9bf6" />
<text x="1208.5" y="1869" font-size="19" font-weight="700" text-anchor="middle" fill="#ffffff" >103</text>
<text x="1551.4" y="1672" font-size="26" textLength="188.6" lengthAdjust="spacingAndGlyphs" fill="#3a3a3a" stroke="#3a3a3a" stroke-width="0.6" >Avg. CSAT trend</text>
<circle cx="2049.6" cy="1665" r="7.2" fill="none" stroke="#4a4a4a" stroke-width="2"/>
<rect x="2048.2" y="1662.5" width="2.8" height="7" fill="#333"/>
<rect x="2048.2" y="1659" width="2.8" height="2.4" fill="#333"/>
<rect x="1630" y="1779.5" width="415" height="2" fill="#f1f1f1" />
<text x="1583.7" y="1787" font-size="17" fill="#bbb" >4.2</text>
<text x="0" y="0" font-size="16" text-anchor="middle" textLength="80" lengthAdjust="spacingAndGlyphs" fill="#777" transform="translate(1565 1840) rotate(-90)">Avg. CSAT</text>
<path d="M1620 1910 L2042 1780.6" stroke="#3a9bf6" stroke-width="3" fill="none"/>
<text x="2165.7" y="1672" font-size="26" textLength="245.7" lengthAdjust="spacingAndGlyphs" fill="#3a3a3a" stroke="#3a3a3a" stroke-width="0.6" >Avg. sentiment trend</text>
<circle cx="2682" cy="1667.7" r="7.2" fill="none" stroke="#4a4a4a" stroke-width="2"/>
<rect x="2680.6" y="1665.2" width="2.8" height="7" fill="#333"/>
<rect x="2680.6" y="1661.7" width="2.8" height="2.4" fill="#333"/>
<rect x="2239.6" y="1799.5" width="432" height="2" fill="#f1f1f1" />
<text x="2203" y="1807" font-size="17" fill="#bbb" >74</text>
<text x="0" y="0" font-size="16" text-anchor="middle" textLength="112" lengthAdjust="spacingAndGlyphs" fill="#777" transform="translate(2179 1833) rotate(-90)">Avg. sentiment</text>
<path d="M2290 1897 L2640.4 1804.6" stroke="#3a9bf6" stroke-width="3" fill="none"/>
</svg>
</div>
<svg width="2920" height="1888" style="position:absolute;left:0;top:0"><rect x="0" y="0" width="54" height="8" fill="#000" shape-rendering="crispEdges"/>
<rect x="2866" y="0" width="54" height="8" fill="#000" shape-rendering="crispEdges"/>
<rect x="0" y="1880" width="54" height="8" fill="#000" shape-rendering="crispEdges"/>
<rect x="2866" y="1880" width="54" height="8" fill="#000" shape-rendering="crispEdges"/>
<rect x="0" y="8" width="40" height="8" fill="#000" shape-rendering="crispEdges"/>
<rect x="2880" y="8" width="40" height="8" fill="#000" shape-rendering="crispEdges"/>
<rect x="0" y="1872" width="40" height="8" fill="#000" shape-rendering="crispEdges"/>
<rect x="2880" y="1872" width="40" height="8" fill="#000" shape-rendering="crispEdges"/>
<rect x="0" y="16" width="32" height="8" fill="#000" shape-rendering="crispEdges"/>
<rect x="2888" y="16" width="32" height="8" fill="#000" shape-rendering="crispEdges"/>
<rect x="0" y="1864" width="32" height="8" fill="#000" shape-rendering="crispEdges"/>
<rect x="2888" y="1864" width="32" height="8" fill="#000" shape-rendering="crispEdges"/>
<rect x="0" y="24" width="24" height="8" fill="#000" shape-rendering="crispEdges"/>
<rect x="2896" y="24" width="24" height="8" fill="#000" shape-rendering="crispEdges"/>
<rect x="0" y="1856" width="24" height="8" fill="#000" shape-rendering="crispEdges"/>
<rect x="2896" y="1856" width="24" height="8" fill="#000" shape-rendering="crispEdges"/>
<rect x="0" y="32" width="16" height="8" fill="#000" shape-rendering="crispEdges"/>
<rect x="2904" y="32" width="16" height="8" fill="#000" shape-rendering="crispEdges"/>
<rect x="0" y="1848" width="16" height="8" fill="#000" shape-rendering="crispEdges"/>
<rect x="2904" y="1848" width="16" height="8" fill="#000" shape-rendering="crispEdges"/>
<rect x="0" y="40" width="8" height="16" fill="#000" shape-rendering="crispEdges"/>
<rect x="2912" y="40" width="8" height="16" fill="#000" shape-rendering="crispEdges"/>
<rect x="0" y="1832" width="8" height="16" fill="#000" shape-rendering="crispEdges"/>
<rect x="2912" y="1832" width="8" height="16" fill="#000" shape-rendering="crispEdges"/></svg>
</body></html>
